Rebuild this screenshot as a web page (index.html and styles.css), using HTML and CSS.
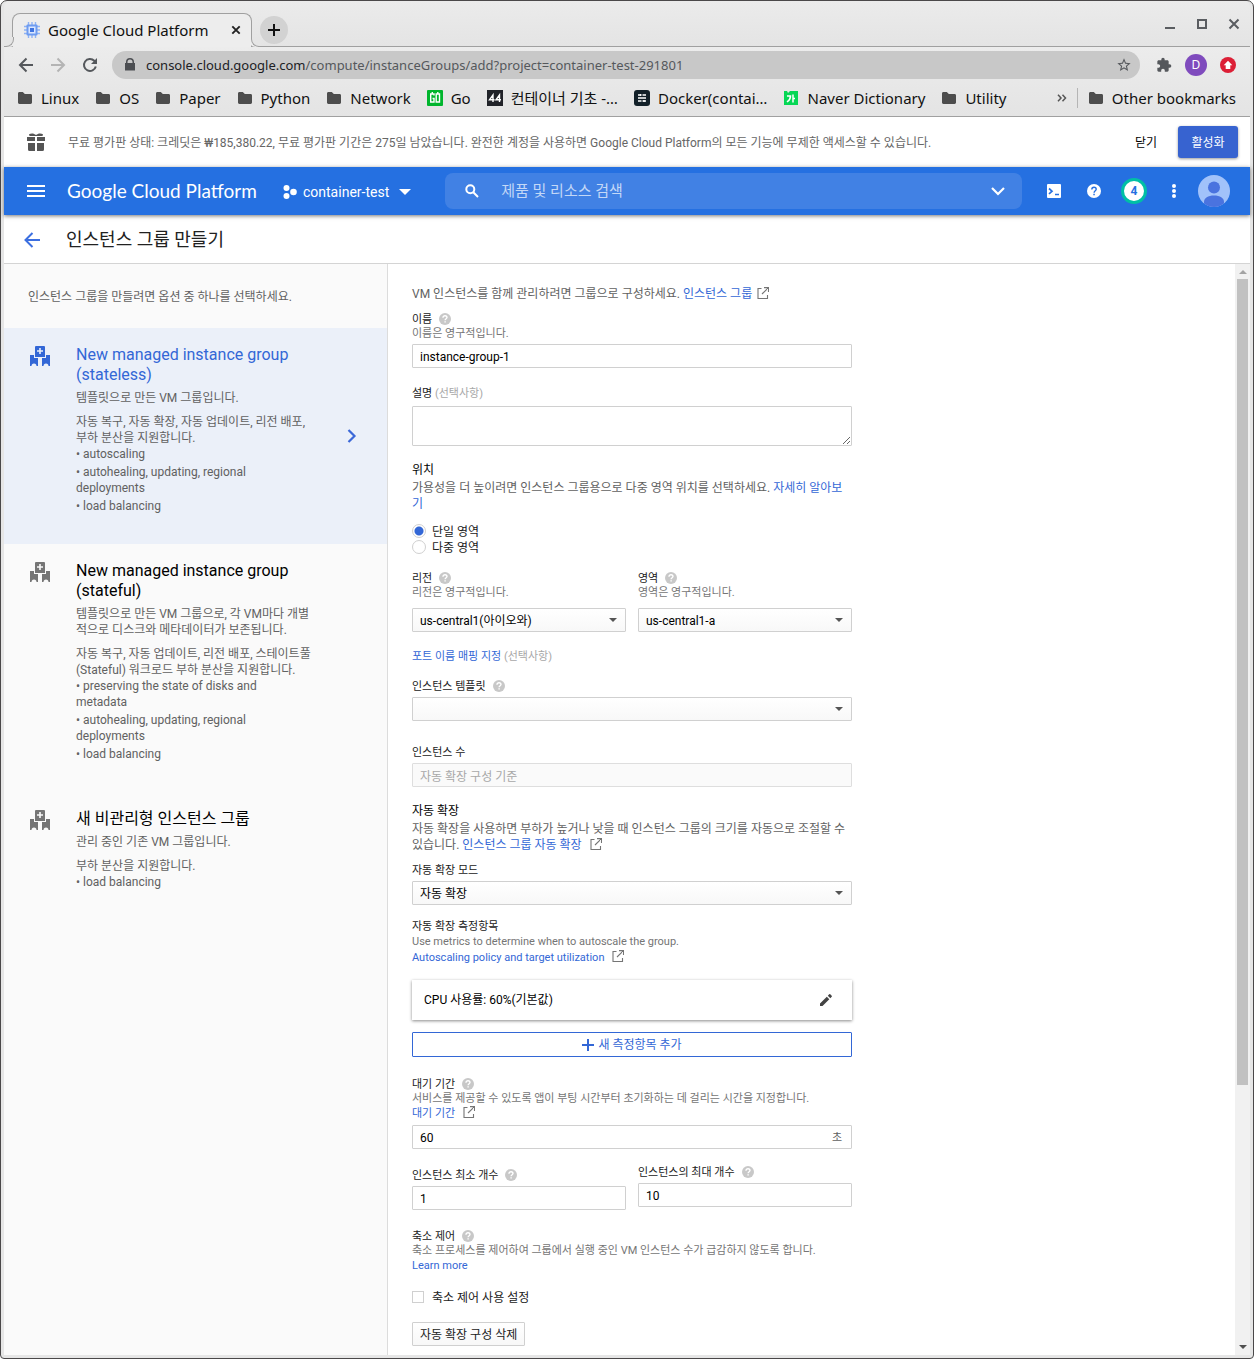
FILE: index.html
```html
<!DOCTYPE html>
<html lang="ko">
<head>
<meta charset="utf-8">
<meta name="viewport" content="width=device-width, initial-scale=1">
<title>Google Cloud Platform</title>
<link rel="stylesheet" href="styles.css">
</head>
<body>
<svg class="sprite" aria-hidden="true">
  <symbol id="folder" viewBox="0 0 16 16"><path d="M1 3.500C1 2.700 1.600 2 2.400 2H5.800L7.800 4H13.600C14.400 4 15 4.600 15 5.400V12.600C15 13.400 14.400 14 13.600 14H2.400C1.600 14 1 13.400 1 12.600Z"/></symbol>
  <symbol id="help" viewBox="0 0 12 12"><circle cx="6" cy="6" r="6" fill="#c8c8c8"/><path d="M4 4.700C4 3.500 4.900 2.800 6 2.800S8 3.500 8 4.600C8 5.700 6.100 5.800 6.100 7.200" fill="none" stroke="#fff" stroke-width="1.400"/><path d="M5.400 8.200h1.400v1.400H5.400z" fill="#fff"/></symbol>
  <symbol id="external" viewBox="0 0 12 12"><path d="M4.500 1.500H1V11.500H10.500V8M7 .6H11.500V5M11.300.8L5 7" fill="none" stroke="#757575" stroke-width="1.100"/></symbol>
  <symbol id="group" viewBox="0 0 20 20"><path fill-rule="evenodd" d="M6 0h8a1 1 0 0 1 1 1v10H5V1a1 1 0 0 1 1-1zm3.200 2v2.200H7v1.600h2.200V8h1.600V5.800H13V4.200h-2.200V2z"/><path d="M0 9h4v3h4v8H6.500a1.500 1.500 0 0 0-5 0H0zM20 9h-4v3h-4v8h1.500a1.500 1.500 0 0 1 5 0H20z"/></symbol>
</svg>
<div class="window">
  <header class="chrome">
    <div class="tabstrip">
      <div class="tab">
        <svg class="i16" viewBox="0 0 16 16"><g stroke="#8fb3f5" stroke-width="1.400"><path d="M4.500 0v16M8 0v16M11.500 0v16M0 4.500h16M0 8h16M0 11.500h16"/></g><rect x="2.500" y="2.500" width="11" height="11" rx="1" fill="#6f9cf0"/><rect x="4.500" y="4.500" width="7" height="7" fill="#dbe7ff"/><rect x="6" y="6" width="4" height="4" fill="#3f74e0"/></svg>
        <span class="tab-title">Google Cloud Platform</span>
        <button class="bare" aria-label="탭 닫기"><svg width="10" height="10" viewBox="0 0 10 10"><path d="M1.300 1.300l7.400 7.400M8.700 1.300L1.300 8.700" stroke="#222" stroke-width="1.900"/></svg></button>
      </div>
      <button class="newtab" aria-label="새 탭"><svg width="12" height="12" viewBox="0 0 12 12"><path d="M6 0v12M0 6h12" stroke="#111" stroke-width="2"/></svg></button>
      <div class="wincontrols">
        <button class="bare" aria-label="최소화"><svg width="12" height="12" viewBox="0 0 12 12"><path d="M1 10h10" stroke="#5a5d61" stroke-width="2"/></svg></button>
        <button class="bare" aria-label="최대화"><svg width="12" height="12" viewBox="0 0 12 12"><rect x="2" y="2" width="8" height="8" fill="none" stroke="#5a5d61" stroke-width="2"/></svg></button>
        <button class="bare" aria-label="닫기"><svg width="12" height="12" viewBox="0 0 12 12"><path d="M1.500 1.500l9 9M10.500 1.500l-9 9" stroke="#5a5d61" stroke-width="2"/></svg></button>
      </div>
    </div>
    <div class="toolbar">
      <button class="bare" aria-label="뒤로"><svg width="16" height="16" viewBox="0 0 16 16"><path d="M15 8H2M8.500 1.500L2 8l6.500 6.500" fill="none" stroke="#55585c" stroke-width="2"/></svg></button>
      <button class="bare" aria-label="앞으로"><svg width="16" height="16" viewBox="0 0 16 16"><path d="M1 8h13M7.500 1.500L14 8l-6.500 6.500" fill="none" stroke="#b4b4b4" stroke-width="2"/></svg></button>
      <button class="bare" aria-label="새로고침"><svg width="16" height="16" viewBox="0 0 16 16"><path d="M13.800 9.500A6 6 0 1 1 12.300 3.800L14 5.500" fill="none" stroke="#55585c" stroke-width="2"/><path d="M15 1v6H9z" fill="#55585c"/></svg></button>
      <div class="omnibox">
        <svg width="12" height="14" viewBox="0 0 12 14"><path d="M2 5V4a4 4 0 0 1 8 0v1h1v7.500H1V5zm1.500 0h5V4a2.500 2.500 0 0 0-5 0z" fill="#4c4e52" fill-rule="evenodd"/></svg>
        <div class="url" role="textbox" contenteditable="true" spellcheck="false" aria-label="주소"><b>console.cloud.google.com</b>/compute/instanceGroups/add?project=container-test-291801</div>
        <button class="bare" aria-label="북마크"><svg width="16" height="16" viewBox="0 0 24 24"><path d="M22 9.240l-7.190-.62L12 2 9.190 8.630 2 9.240l5.460 4.730L5.820 21 12 17.270 18.180 21l-1.630-7.030L22 9.240zM12 15.400l-3.760 2.270 1-4.280-3.320-2.880 4.380-.38L12 6.100l1.710 4.040 4.380.38-3.320 2.880 1 4.280L12 15.400z" fill="#55585c"/></svg></button>
      </div>
      <div class="extensions">
        <button class="bare" aria-label="확장 프로그램"><svg width="16" height="16" viewBox="0 0 24 24"><path d="M20.500 11H19V7c0-1.100-.9-2-2-2h-4V3.500a2.500 2.500 0 0 0-5 0V5H4c-1.100 0-1.990.9-1.990 2v3.800H3.500c1.490 0 2.700 1.210 2.700 2.700s-1.210 2.700-2.700 2.700H2V20c0 1.100.9 2 2 2h3.800v-1.500c0-1.490 1.210-2.700 2.700-2.700s2.700 1.210 2.700 2.700V22H17c1.100 0 2-.9 2-2v-4h1.500a2.500 2.500 0 0 0 0-5z" fill="#55585c"/></svg></button>
        <button class="profile">D</button>
        <button class="bare" aria-label="업데이트"><svg width="16" height="16" viewBox="0 0 16 16"><circle cx="8" cy="8" r="8" fill="#dc1f36"/><path d="M8 3.800l4.300 4.400H10.300V12H5.700V8.200H3.700z" fill="#fff"/></svg></button>
      </div>
    </div>
    <nav class="bookmarks">
      <a href="#"><svg class="i16"><use href="#folder"/></svg>Linux</a>
      <a href="#"><svg class="i16"><use href="#folder"/></svg>OS</a>
      <a href="#"><svg class="i16"><use href="#folder"/></svg>Paper</a>
      <a href="#"><svg class="i16"><use href="#folder"/></svg>Python</a>
      <a href="#"><svg class="i16"><use href="#folder"/></svg>Network</a>
      <a href="#"><svg class="i16" viewBox="0 0 16 16"><rect width="16" height="16" rx="1" fill="#00b52d"/><path d="M7 5.500V4H3.700v8H7V8.500H5.500M9.200 4h3.300v8H9.200zM10.800 2v2M5.300 2v2" fill="none" stroke="#fff" stroke-width="1.400"/></svg>Go</a>
      <a href="#"><svg class="i16" viewBox="0 0 16 16"><rect width="16" height="16" fill="#212329"/><path d="M6 12V5L2.500 9.800H7.500M12.500 12V5L9 9.800h5" fill="none" stroke="#fff" stroke-width="1.400"/></svg>컨테이너 기초 -…</a>
      <a href="#"><svg class="i16" viewBox="0 0 16 16"><rect width="16" height="16" rx="3" fill="#122028"/><path d="M4 5h3.500M8.500 5H12M4 8h8M4 11h3.500M8.500 11H12M6.500 4v2M10 10v2" stroke="#fff" stroke-width="1.300"/></svg>Docker(contai…</a>
      <a href="#"><svg class="i16" viewBox="0 0 16 16"><path d="M1 1h3l1 2 2-2h8v14H1z" fill="#06d755"/><path d="M4 6h3.500c0 3-1.300 4.500-3.500 6M10 4.500v8M10 8.500h2" fill="none" stroke="#fff" stroke-width="1.500"/></svg>Naver Dictionary</a>
      <a href="#"><svg class="i16"><use href="#folder"/></svg>Utility</a>
      <div class="bookmarks-end">
        <button class="bare more" aria-label="북마크 더보기"><svg width="10" height="8" viewBox="0 0 10 8"><path d="M1 .8L4 4 1 7.200M5.500 .8L8.500 4 5.500 7.200" fill="none" stroke="#555" stroke-width="1.500"/></svg></button>
        <a href="#"><svg class="i16"><use href="#folder"/></svg>Other bookmarks</a>
      </div>
    </nav>
  </header>

  <div class="page">
    <section class="trial">
      <svg width="18" height="18" viewBox="0 0 18 18"><path d="M0 4h8v4H0zM10 4h8v4h-8zM1 10h7v8H2.500A1.500 1.500 0 0 1 1 16.500zM10 10h7v6.500a1.500 1.500 0 0 1-1.500 1.500H10zM2 1.200C4 0 7 0 9 2c2-2 5-2 7-.8L15.500 3h-13z" fill="#555"/></svg>
      <p>무료 평가판 상태: 크레딧은 ₩185,380.22, 무료 평가판 기간은 275일 남았습니다. 완전한 계정을 사용하면 Google Cloud Platform의 모든 기능에 무제한 액세스할 수 있습니다.</p>
      <button class="dismiss">닫기</button>
      <button class="activate">활성화</button>
    </section>

    <header class="appbar">
      <button class="bare menu" aria-label="탐색 메뉴"><svg width="18" height="12" viewBox="0 0 18 12"><path d="M0 1h18M0 6h18M0 11h18" stroke="#fff" stroke-width="2"/></svg></button>
      <a class="brand" href="#">Google Cloud Platform</a>
      <button class="project">
        <svg width="14" height="14" viewBox="0 0 14 14" fill="#fff"><circle cx="3.500" cy="3" r="3"/><circle cx="3.500" cy="11" r="3"/><circle cx="10.500" cy="7" r="3.300"/></svg>
        container-test
        <svg class="caret" width="12" height="6" viewBox="0 0 12 6" fill="#fff"><path d="M0 0h12L6 6z"/></svg>
      </button>
      <div class="search">
        <svg width="14" height="14" viewBox="0 0 14 14"><circle cx="5.300" cy="5.300" r="4" fill="none" stroke="#fff" stroke-width="2"/><path d="M8.300 8.300l4.700 4.700" stroke="#fff" stroke-width="2"/></svg>
        <input type="search" placeholder="제품 및 리소스 검색" aria-label="제품 및 리소스 검색">
        <svg width="14" height="9" viewBox="0 0 14 9"><path d="M1 1l6 6 6-6" fill="none" stroke="#fff" stroke-width="2.200"/></svg>
      </div>
      <div class="tools">
        <button class="bare" aria-label="Cloud Shell"><svg width="14" height="14" viewBox="0 0 14 14"><rect width="14" height="14" rx="1" fill="#fff"/><path d="M2 4.500L5 7.200 2 10M8 10.500h4" fill="none" stroke="#2670e1" stroke-width="1.700"/></svg></button>
        <button class="bare" aria-label="도움말"><svg width="14" height="14" viewBox="0 0 14 14"><circle cx="7" cy="7" r="7" fill="#fff"/><path d="M4.800 5.500C4.800 4.100 5.700 3.200 7 3.200S9.200 4 9.200 5.300C9.200 6.700 7.100 6.900 7.100 8.700" fill="none" stroke="#2670e1" stroke-width="1.400"/><path d="M6.300 9.800h1.500v1.500H6.300z" fill="#2670e1"/></svg></button>
        <button class="count" aria-label="알림 4개">4</button>
        <button class="bare" aria-label="설정"><svg width="14" height="14" viewBox="0 0 14 14" fill="#fff"><circle cx="7" cy="2" r="2"/><circle cx="7" cy="7" r="2"/><circle cx="7" cy="12" r="2"/></svg></button>
        <button class="bare" aria-label="계정"><svg width="32" height="32" viewBox="0 0 32 32"><defs><clipPath id="disc"><circle cx="16" cy="16" r="16"/></clipPath></defs><g clip-path="url(#disc)"><path d="M0 0h32v32H0z" fill="#a1c2fa"/><circle cx="16" cy="12.500" r="6" fill="#4a73df"/><path d="M6 32v-5c0-4 4-6.500 10-6.500s10 2.500 10 6.500v5z" fill="#4a73df"/></g></svg></button>
      </div>
    </header>

    <div class="titlebar">
      <button class="bare" aria-label="뒤로"><svg width="16" height="16" viewBox="0 0 16 16"><path d="M16 8H2M8.500 1L1.500 8l7 7" fill="none" stroke="#3c6fe0" stroke-width="2"/></svg></button>
      <h1>인스턴스 그룹 만들기</h1>
    </div>

    <div class="content">
      <aside class="sidebar">
        <p class="lead">인스턴스 그룹을 만들려면 옵션 중 하나를 선택하세요.</p>
        <a class="option selected" href="#">
          <svg width="20" height="20"><use href="#group"/></svg>
          <div class="option-body">
            <h2>New managed instance group (stateless)</h2>
            <p>템플릿으로 만든 VM 그룹입니다.</p>
            <p>자동 복구, 자동 확장, 자동 업데이트, 리전 배포, 부하 분산을 지원합니다.</p>
            <ul><li>• autoscaling</li><li>• autohealing, updating, regional deployments</li><li>• load balancing</li></ul>
          </div>
          <svg class="chevron" width="10" height="14" viewBox="0 0 10 14"><path d="M1.500 1L7.500 7l-6 6" fill="none" stroke="#3b68d8" stroke-width="2.200"/></svg>
        </a>
        <a class="option" href="#">
          <svg width="20" height="20"><use href="#group"/></svg>
          <div class="option-body">
            <h2>New managed instance group (stateful)</h2>
            <p>템플릿으로 만든 VM 그룹으로, 각 VM마다 개별적으로 디스크와 메타데이터가 보존됩니다.</p>
            <p>자동 복구, 자동 업데이트, 리전 배포, 스테이트풀(Stateful) 워크로드 부하 분산을 지원합니다.</p>
            <ul><li>• preserving the state of disks and metadata</li><li>• autohealing, updating, regional deployments</li><li>• load balancing</li></ul>
          </div>
        </a>
        <a class="option" href="#">
          <svg width="20" height="20"><use href="#group"/></svg>
          <div class="option-body">
            <h2>새 비관리형 인스턴스 그룹</h2>
            <p>관리 중인 기존 VM 그룹입니다.</p>
            <p>부하 분산을 지원합니다.</p>
            <ul><li>• load balancing</li></ul>
          </div>
        </a>
      </aside>

      <main>
        <form>
          <p class="text">VM 인스턴스를 함께 관리하려면 그룹으로 구성하세요. <a href="#">인스턴스 그룹</a> <svg class="ext near"><use href="#external"/></svg></p>

          <div class="field first">
            <label for="name">이름<svg class="help"><use href="#help"/></svg></label>
            <p class="hint">이름은 영구적입니다.</p>
            <input class="box" id="name" type="text" value="instance-group-1">
          </div>

          <div class="field">
            <label for="desc">설명 <span class="optional">(선택사항)</span></label>
            <textarea class="box" id="desc"></textarea>
          </div>

          <fieldset class="zone">
            <legend>위치</legend>
            <p class="text">가용성을 더 높이려면 인스턴스 그룹용으로 다중 영역 위치를 선택하세요. <a href="#">자세히 알아보기</a></p>
            <div class="choices">
              <label class="choice"><input type="radio" name="zone" checked>단일 영역</label>
              <label class="choice"><input type="radio" name="zone">다중 영역</label>
            </div>
          </fieldset>

          <div class="pair regions">
            <div>
              <label for="region">리전<svg class="help"><use href="#help"/></svg></label>
              <p class="hint">리전은 영구적입니다.</p>
              <div class="select"><select class="box" id="region"><option>us-central1(아이오와)</option></select></div>
            </div>
            <div>
              <label for="area">영역<svg class="help"><use href="#help"/></svg></label>
              <p class="hint">영역은 영구적입니다.</p>
              <div class="select"><select class="box" id="area"><option>us-central1-a</option></select></div>
            </div>
          </div>

          <p class="hint ports"><a href="#">포트 이름 매핑 지정</a> <span class="optional">(선택사항)</span></p>

          <div class="field template">
            <label for="template">인스턴스 템플릿<svg class="help"><use href="#help"/></svg></label>
            <div class="select"><select class="box" id="template"><option></option></select></div>
          </div>

          <div class="field amount">
            <label for="amount">인스턴스 수</label>
            <input class="box" id="amount" type="text" value="자동 확장 구성 기준" disabled>
          </div>

          <h3>자동 확장</h3>
          <p class="text">자동 확장을 사용하면 부하가 높거나 낮을 때 인스턴스 그룹의 크기를 자동으로 조절할 수 있습니다. <a href="#">인스턴스 그룹 자동 확장</a> <svg class="ext"><use href="#external"/></svg></p>

          <div class="field mode">
            <label for="mode">자동 확장 모드</label>
            <div class="select"><select class="box" id="mode"><option>자동 확장</option></select></div>
          </div>

          <div class="metrics">
            <h4>자동 확장 측정항목</h4>
            <p class="hint tall">Use metrics to determine when to autoscale the group.</p>
            <p class="hint tall"><a href="#">Autoscaling policy and target utilization</a> <svg class="ext"><use href="#external"/></svg></p>
            <div class="card">
              <span>CPU 사용률: 60%(기본값)</span>
              <button type="button" class="bare" aria-label="수정"><svg width="12" height="12" viewBox="0 0 12 12"><path d="M0 9.500V12h2.500l6.800-6.800-2.500-2.500zM11.700 2.800a.8.8 0 0 0 0-1.100L10.300.3a.8.8 0 0 0-1.100 0L7.800 1.700l2.500 2.500z" fill="#444"/></svg></button>
            </div>
            <button type="button" class="add"><svg width="12" height="12" viewBox="0 0 12 12"><path d="M6 0v12M0 6h12" stroke="#3367d6" stroke-width="2"/></svg>새 측정항목 추가</button>
          </div>

          <div class="field cooldown">
            <label for="cooldown">대기 기간<svg class="help"><use href="#help"/></svg></label>
            <p class="hint">서비스를 제공할 수 있도록 앱이 부팅 시간부터 초기화하는 데 걸리는 시간을 지정합니다.</p>
            <p class="hint tall"><a href="#">대기 기간</a> <svg class="ext"><use href="#external"/></svg></p>
            <div class="box suffix"><input id="cooldown" type="text" value="60"><span>초</span></div>
          </div>

          <div class="pair limits">
            <div class="lower">
              <label for="min">인스턴스 최소 개수<svg class="help"><use href="#help"/></svg></label>
              <input class="box" id="min" type="text" value="1">
            </div>
            <div>
              <label for="max">인스턴스의 최대 개수<svg class="help"><use href="#help"/></svg></label>
              <input class="box" id="max" type="text" value="10">
            </div>
          </div>

          <div class="scalein">
            <h4>축소 제어<svg class="help"><use href="#help"/></svg></h4>
            <p class="hint">축소 프로세스를 제어하여 그룹에서 실행 중인 VM 인스턴스 수가 급감하지 않도록 합니다.</p>
            <p class="hint tall"><a href="#">Learn more</a></p>
            <label class="choice check"><input type="checkbox">축소 제어 사용 설정</label>
          </div>

          <button type="button" class="remove">자동 확장 구성 삭제</button>
        </form>
      </main>
      <div class="scrollbar" aria-hidden="true">
        <svg width="8" height="4" viewBox="0 0 8 4"><path d="M0 4l4-4 4 4z" fill="#a3a3a3"/></svg>
        <div class="track"><div class="thumb"></div></div>
        <svg width="8" height="4" viewBox="0 0 8 4"><path d="M0 0h8L4 4z" fill="#505050"/></svg>
      </div>
    </div>
  </div>
</div>
</body>
</html>
```

FILE: styles.css
```css
* { box-sizing: border-box; margin: 0; padding: 0; }

body {
  font: 12px/16px Roboto, "Noto Sans CJK KR", sans-serif;
  color: #212121;
  background: #fff;
}

a { color: #3367d6; text-decoration: none; }
button, input, select, textarea { font: inherit; color: inherit; }
button { cursor: pointer; }
ul { list-style: none; }
svg { display: block; flex: none; }
h1, h2, h3, h4, b { font-weight: 400; }
.sprite { display: none; }
.bare { display: flex; background: none; border: 0; flex: none; }
.i16 { width: 16px; height: 16px; fill: #4d4d4d; }

.window {
  display: flex;
  flex-direction: column;
  min-height: 100vh;
  padding: 0 3px 3px;
  border: 1px solid #4a4849;
  border-radius: 7px 7px 4px 4px;
  background: #e6e6e6;
}

/* Browser frame */
.chrome {
  font-family: "Noto Sans", "Noto Sans CJK KR", sans-serif;
  color: #111;
  background: linear-gradient(#ebebeb, #e4e4e4 45px, #ececec 46px, #e4e4e4);
  border-bottom: 1px solid #a0a0a0;
  border-radius: 6px 6px 0 0;
}
.tabstrip {
  display: flex;
  align-items: center;
  height: 46px;
  padding: 12px 10px 0 8px;
  border-bottom: 1px solid #a0a0a0;
}
.tab {
  position: relative;
  display: flex;
  align-items: center;
  gap: 8px;
  width: 240px;
  height: 34px;
  margin-bottom: -1px;
  padding: 0 10px 2px 11px;
  border: 1px solid #a0a0a0;
  border-bottom: 0;
  border-radius: 8px 8px 0 0;
  background: #ededed;
}
/* Curved feet where the tab meets the strip line */
.tab::before, .tab::after {
  content: "";
  position: absolute;
  bottom: 0;
  width: 9px;
  height: 9px;
  border: 1px solid #a0a0a0;
  border-top: 0;
  background: #e5e5e5;
}
.tab::before { right: 100%; margin-right: -1px; left: -9px; border-left: 0; border-radius: 0 0 8px 0; box-shadow: 3px 0 #ededed; }
.tab::after { left: 100%; border-right: 0; border-radius: 0 0 0 8px; box-shadow: -3px 0 #ededed; }
.tab-title { flex: 1; font-size: 15px; line-height: 20px; white-space: nowrap; }
.newtab {
  display: flex;
  align-items: center;
  justify-content: center;
  width: 28px;
  height: 28px;
  margin: 0 auto 0 8px;
  border: 0;
  border-radius: 50%;
  background: #d2d2d2;
}
.wincontrols { display: flex; gap: 20px; margin-bottom: 12px; }

.toolbar { display: flex; align-items: center; gap: 16px; padding: 4px 14px 0; }
.omnibox {
  display: flex;
  flex: 1;
  align-items: center;
  gap: 10px;
  min-width: 0;
  height: 28px;
  margin-left: -2px;
  padding: 0 8px 0 12px;
  border-radius: 14px;
  background: #c8c8c8;
}
.url { flex: 1; min-width: 0; overflow: hidden; font-size: 13px; line-height: 20px; white-space: nowrap; color: #55585c; outline: 0; }
.url b { color: #202124; }
.extensions { display: flex; align-items: center; gap: 13px; }
.profile { width: 22px; height: 22px; border: 0; border-radius: 50%; background: #7f4bbd; color: #fff; font-size: 12px; }

.bookmarks { display: flex; align-items: center; gap: 16px; height: 37px; padding: 0 14px 0 13px; }
.bookmarks a { display: flex; align-items: center; gap: 8px; font-size: 15px; line-height: 20px; white-space: nowrap; color: #111; }
.bookmarks-end { display: flex; align-items: center; margin-left: auto; }
.bookmarks-end a { padding-left: 10px; border-left: 1px solid #b5b5b5; }
.more { margin-right: 10px; }

.page { display: flex; flex: 1; flex-direction: column; background: #fff; }

/* Free trial banner */
.trial { display: flex; align-items: center; height: 50px; padding: 0 12px 0 23px; }
.trial p { flex: 1; margin-left: 23px; padding-top: 2px; color: #666; }
.trial button { height: 32px; padding-top: 2px; border: 0; border-radius: 3px; }
.trial .dismiss { width: 64px; background: none; color: #000; }
.trial .activate { width: 60px; background: #3763d0; color: #fff; box-shadow: 0 1px 3px #0006; }

/* Application bar */
.appbar {
  position: relative;
  display: flex;
  align-items: center;
  height: 48px;
  padding: 0 20px 0 23px;
  background: #2570e1;
  color: #fff;
  box-shadow: 0 1px 4px #0008;
}
.brand { width: 194px; margin-left: 22px; color: #fff; font: 19px/24px Lato, sans-serif; white-space: nowrap; }
.project { display: flex; align-items: center; gap: 6px; margin-left: 22px; padding-top: 2px; border: 0; background: none; font-size: 14px; white-space: nowrap; }
.caret { margin-left: 4px; }
.search {
  display: flex;
  flex: 1;
  align-items: center;
  gap: 22px;
  max-width: 577px;
  height: 36px;
  margin-left: 34px;
  padding: 0 17px 0 20px;
  border-radius: 8px;
  background: #4181e4;
}
.search input { flex: 1; min-width: 0; border: 0; background: none; font-size: 15px; outline: 0; }
.search input::placeholder { color: #c3d8f7; opacity: 1; }
.tools { display: flex; align-items: center; gap: 26px; margin-left: auto; padding-left: 24px; }
.tools > :last-child { margin-left: -9px; }
.count { width: 26px; height: 26px; margin: 0 -6px; border: 3px solid #00bfa5; border-radius: 50%; background: #fff; color: #2570e1; font-weight: 700; }

.titlebar { display: flex; align-items: center; gap: 26px; height: 49px; padding: 2px 20px 0; border-bottom: 1px solid #d4d4d4; }
.titlebar h1 { font-size: 18px; line-height: 24px; }

.content { display: flex; flex: 1; }

/* Group type chooser */
.sidebar { flex: none; width: 384px; border-right: 1px solid #dcdcdc; background: #fafafa; color: #616161; }
.lead { padding: 25px 24px 23px; }
.option { display: flex; padding: 17px 30px 30px 26px; color: #616161; fill: #757575; }
.option > svg { margin-top: 1px; }
.option-body { width: 238px; margin-left: 26px; }
.option h2 { font-size: 16px; line-height: 20px; color: #000; }
.option h2 + p { margin: 5px 0 8px; }
.option li { padding-right: 50px; margin-top: 2px; }
.option li:first-child { margin-top: 0; }
.selected { background: #ebf0f9; fill: #3367d6; }
.selected h2 { color: #3367d6; }
.option .chevron { align-self: center; margin: 13px 0 0 auto; }

/* Form */
main { flex: 1; min-width: 0; padding: 22px 24px 9px; }
form { max-width: 440px; }
.text { color: #616161; }
label, h4 { display: flex; align-items: center; font-size: 11px; line-height: 14px; white-space: pre; }
.hint { font-size: 11px; line-height: 14px; color: #757575; }
.hint.tall { line-height: 16px; }
.optional { color: #a8a8a8; }
.help { width: 12px; height: 12px; margin: 0 0 2px 7px; }
.ext { display: inline-block; width: 12px; height: 12px; margin-left: 5px; vertical-align: -1px; }
.ext.near { margin-left: 2px; }
.box {
  display: block;
  width: 100%;
  height: 24px;
  margin-top: 3px;
  padding: 1px 7px 0;
  border: 1px solid #d0d0d0;
  border-radius: 1px;
  background: #fff;
  color: #000;
}
.box:disabled { padding-top: 0; background: #fafafa; border-color: #dedede; color: #a8a8a8; }
textarea.box { height: 40px; margin-top: 5px; }
.select { position: relative; margin-top: 3px; }
.select::after {
  content: "";
  position: absolute;
  top: 10px;
  right: 9px;
  border: 4px solid transparent;
  border-top-color: #555;
  border-bottom: 0;
  pointer-events: none;
}
select.box { appearance: none; margin-top: 0; background: linear-gradient(#fff, #f8f8f8); }
.suffix { display: flex; align-items: center; padding-right: 9px; }
.suffix input { flex: 1; min-width: 0; border: 0; background: none; outline: 0; }
.suffix span { font-size: 11px; color: #616161; }

.field { margin-top: 19px; }
.field.first { margin-top: 11px; }
fieldset { border: 0; }
legend, h3 { font-size: 12px; line-height: 16px; color: #000; }
.zone { margin-top: 16px; }
.zone .text { margin-top: 2px; }
.choices { margin-top: 12px; }
.choice { gap: 6px; font-size: 12px; line-height: 16px; }
.choice input { appearance: none; width: 14px; height: 14px; margin-bottom: 2px; border: 1px solid #d0d0d0; border-radius: 50%; background: #fff; }
.choice input:checked { background: radial-gradient(circle, #3367d6 4px, #fff 5px); }
.choice.check { gap: 8px; margin-top: 16px; }
.choice.check input { width: 12px; height: 12px; border-radius: 0; }

.pair { display: grid; grid-template-columns: 1fr 1fr; gap: 12px; }
.regions { margin-top: 16px; }
.regions .select { margin-top: 8px; }
.ports { margin-top: 18px; }
.template { margin-top: 16px; }
.amount { margin-top: 25px; }
h3 { margin-top: 16px; }
h3 + .text { margin-top: 2px; }
.mode { margin-top: 11px; }
.metrics { margin-top: 15px; }
.card {
  display: flex;
  align-items: center;
  justify-content: space-between;
  height: 40px;
  margin-top: 14px;
  padding: 0 20px 0 12px;
  background: #fff;
  color: #000;
  box-shadow: 0 1px 3px #0007;
}
.add {
  display: flex;
  align-items: center;
  justify-content: center;
  gap: 4px;
  width: 100%;
  height: 25px;
  margin-top: 12px;
  border: 1px solid #3367d6;
  border-radius: 1px;
  background: #fff;
  color: #3367d6;
}
.cooldown { margin-top: 21px; }
.limits { margin-top: 17px; }
.lower { padding-top: 3px; }
.scalein { margin-top: 20px; }
.remove {
  height: 24px;
  margin-top: 16px;
  padding: 1px 7px 0;
  border: 1px solid #d0d0d0;
  border-radius: 1px;
  background: linear-gradient(#fff, #f8f8f8);
}

.scrollbar { display: flex; flex-direction: column; align-items: center; width: 15px; padding: 6px 0; background: #f1f1f1; }
.track { flex: 1; align-self: stretch; margin: 5px 2px; }
.thumb { height: 76%; background: #c1c1c1; }
```
